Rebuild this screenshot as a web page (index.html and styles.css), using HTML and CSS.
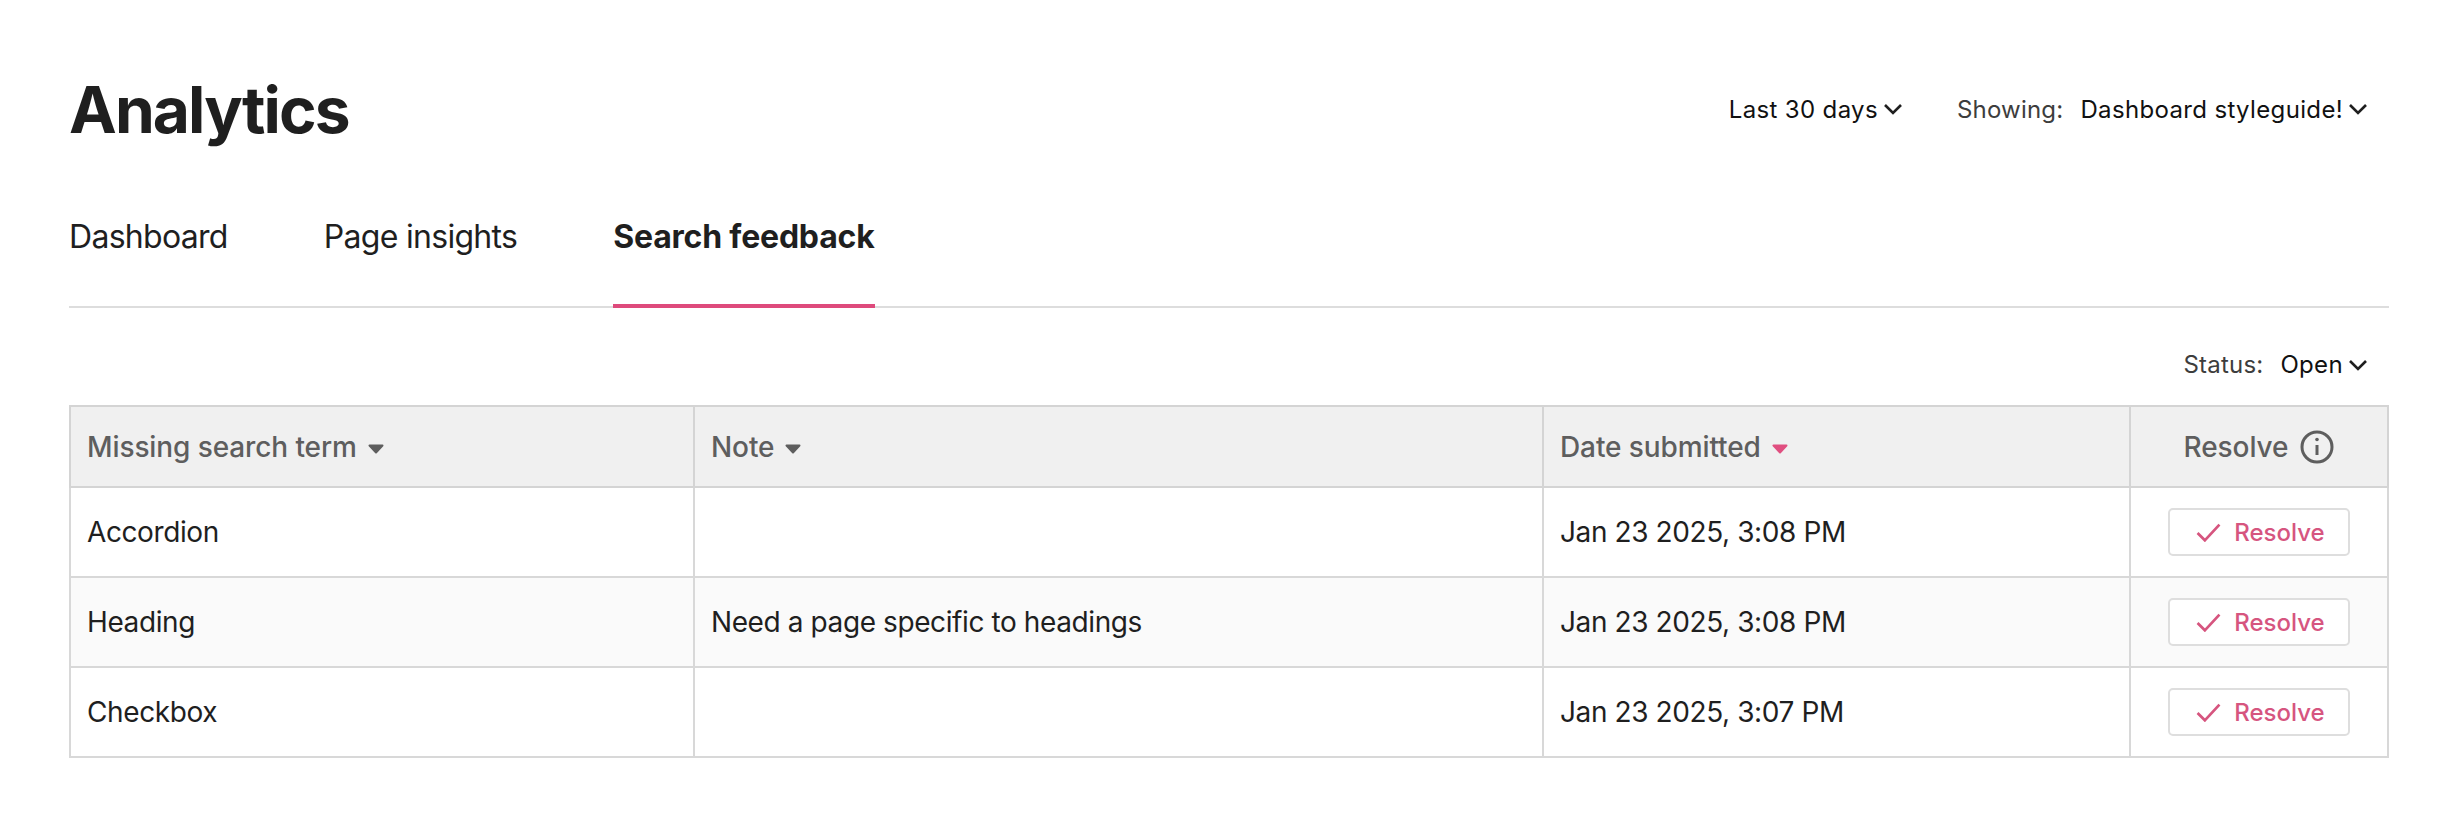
FILE: index.html
```html
<!DOCTYPE html>
<html lang="en">
<head>
    <meta charset="UTF-8">
    <title>Analytics</title>
    <link rel="stylesheet" href="styles.css">
</head>
<body>
    <div class="page">
        <div class="header">
            <h1>Analytics</h1>
            <div class="filters">
                <div class="filter">
                    <span class="value">Last 30 days</span>
                    <svg class="chevron" viewBox="0 0 20 12"><path d="M2 2l8 8 8-8"/></svg>
                </div>
                <div class="filter">
                    <span class="label">Showing:</span>
                    <span class="value">Dashboard styleguide!</span>
                    <svg class="chevron" viewBox="0 0 20 12"><path d="M2 2l8 8 8-8"/></svg>
                </div>
            </div>
        </div>

        <div class="tabs">
            <a class="tab">Dashboard</a>
            <a class="tab">Page insights</a>
            <a class="tab active">Search feedback</a>
        </div>

        <div class="status">
            <div class="filter">
                <span class="label">Status:</span>
                <span class="value">Open</span>
                <svg class="chevron" viewBox="0 0 20 12"><path d="M2 2l8 8 8-8"/></svg>
            </div>
        </div>

        <table class="feedback">
            <colgroup>
                <col class="col-term">
                <col class="col-note">
                <col class="col-date">
                <col class="col-resolve">
            </colgroup>
            <thead>
                <tr>
                    <th>Missing search term<svg class="sort" viewBox="0 0 16 10"><path d="M1.500 1.500h13l-6.500 7z"/></svg></th>
                    <th>Note<svg class="sort" viewBox="0 0 16 10"><path d="M1.500 1.500h13l-6.500 7z"/></svg></th>
                    <th>Date submitted<svg class="sort current" viewBox="0 0 16 10"><path d="M1.500 1.500h13l-6.500 7z"/></svg></th>
                    <th class="center">
                        <span class="resolve-head">Resolve
                            <svg class="info" viewBox="0 0 34 34">
                                <circle cx="17" cy="17" r="15"/>
                                <path d="M17 15v10"/>
                                <circle class="dot" cx="17" cy="9.500" r="1.800"/>
                            </svg>
                        </span>
                    </th>
                </tr>
            </thead>
            <tbody>
                <tr>
                    <td>Accordion</td>
                    <td></td>
                    <td>Jan 23 2025, 3:08 PM</td>
                    <td class="center"><button class="resolve"><svg class="check" viewBox="0 0 24 18"><path d="M1.500 9.500l7 7L22.500 1.500"/></svg>Resolve</button></td>
                </tr>
                <tr>
                    <td>Heading</td>
                    <td>Need a page specific to headings</td>
                    <td>Jan 23 2025, 3:08 PM</td>
                    <td class="center"><button class="resolve"><svg class="check" viewBox="0 0 24 18"><path d="M1.500 9.500l7 7L22.500 1.500"/></svg>Resolve</button></td>
                </tr>
                <tr>
                    <td>Checkbox</td>
                    <td></td>
                    <td>Jan 23 2025, 3:07 PM</td>
                    <td class="center"><button class="resolve"><svg class="check" viewBox="0 0 24 18"><path d="M1.500 9.500l7 7L22.500 1.500"/></svg>Resolve</button></td>
                </tr>
            </tbody>
        </table>
    </div>
</body>
</html>
```

FILE: styles.css
```css
body {
    font-family: Inter, "Liberation Sans", sans-serif;
    background-color: #fff;
    color: #1f1f1f;
    margin: 0;
}
.page {
    padding: 64px 55px 0 69px;
}
.header {
    display: flex;
    align-items: center;
    justify-content: space-between;
    height: 90px;
    padding-right: 21px;
}
h1 {
    font-size: 64px;
    font-weight: 700;
    letter-spacing: -1.9px;
    margin: 0;
}
.filters {
    display: flex;
    gap: 54px;
}
.filter {
    display: flex;
    align-items: center;
    font-size: 24px;
    letter-spacing: 0.2px;
}
.filter .label {
    color: #3d3d3d;
    margin-right: 17px;
}
.filter .value {
    color: #111;
    letter-spacing: 0.35px;
}
.chevron {
    width: 20px;
    height: 12px;
    margin-left: 5px;
    fill: none;
    stroke: #1f1f1f;
    stroke-width: 2.6;
}
.tabs {
    display: flex;
    gap: 96px;
    margin-top: 37px;
    border-bottom: 2px solid #ddd;
    height: 115px;
}
.tab {
    font-size: 32px;
    line-height: 39px;
    letter-spacing: -0.7px;
    padding-top: 26px;
    box-sizing: border-box;
    height: 117px;
}
.tab.active {
    font-weight: 700;
    letter-spacing: -0.2px;
    border-bottom: 4px solid #de4a7c;
}
.status {
    display: flex;
    justify-content: flex-end;
    padding: 42px 21px 0 0;
    height: 55px;
}
.status .filter {
    height: 29px;
}
.feedback {
    width: 100%;
    table-layout: fixed;
    border-collapse: collapse;
    font-size: 28px;
    letter-spacing: -0.4px;
}
.col-term { width: 624px; }
.col-note { width: 849px; }
.col-date { width: 587px; }
th, td {
    border: 2px solid #d4d4d4;
    padding: 0 16px;
    text-align: left;
    height: 88px;
}
th {
    background-color: #f0f0f0;
    color: #5e5e5e;
    font-weight: 500;
    letter-spacing: -0.1px;
    height: 79px;
}
td {
    border-color: #d8d8d8;
}
tbody tr:nth-child(2) {
    background-color: #fafafa;
}
th.center, td.center {
    text-align: center;
}
.sort {
    width: 16px;
    height: 10px;
    margin-left: 11px;
    vertical-align: 3px;
    fill: #5e5e5e;
    stroke: #5e5e5e;
    stroke-width: 2;
    stroke-linejoin: round;
}
.sort.current {
    fill: #e04f80;
    stroke: #e04f80;
}
.resolve-head {
    display: inline-flex;
    align-items: center;
    gap: 12px;
}
.info {
    width: 34px;
    height: 34px;
    fill: none;
    stroke: #5e5e5e;
    stroke-width: 3;
}
.info .dot {
    fill: #5e5e5e;
    stroke: none;
}
.resolve {
    display: inline-flex;
    align-items: center;
    justify-content: center;
    gap: 13px;
    width: 182px;
    height: 48px;
    padding: 0 0 0 3px;
    background-color: #fff;
    border: 2px solid #dedede;
    border-radius: 5px;
    color: #d6557f;
    font-family: inherit;
    font-size: 24px;
    font-weight: 500;
}
.check {
    width: 25px;
    height: 19px;
    fill: none;
    stroke: #d6557f;
    stroke-width: 2.6;
}
```
